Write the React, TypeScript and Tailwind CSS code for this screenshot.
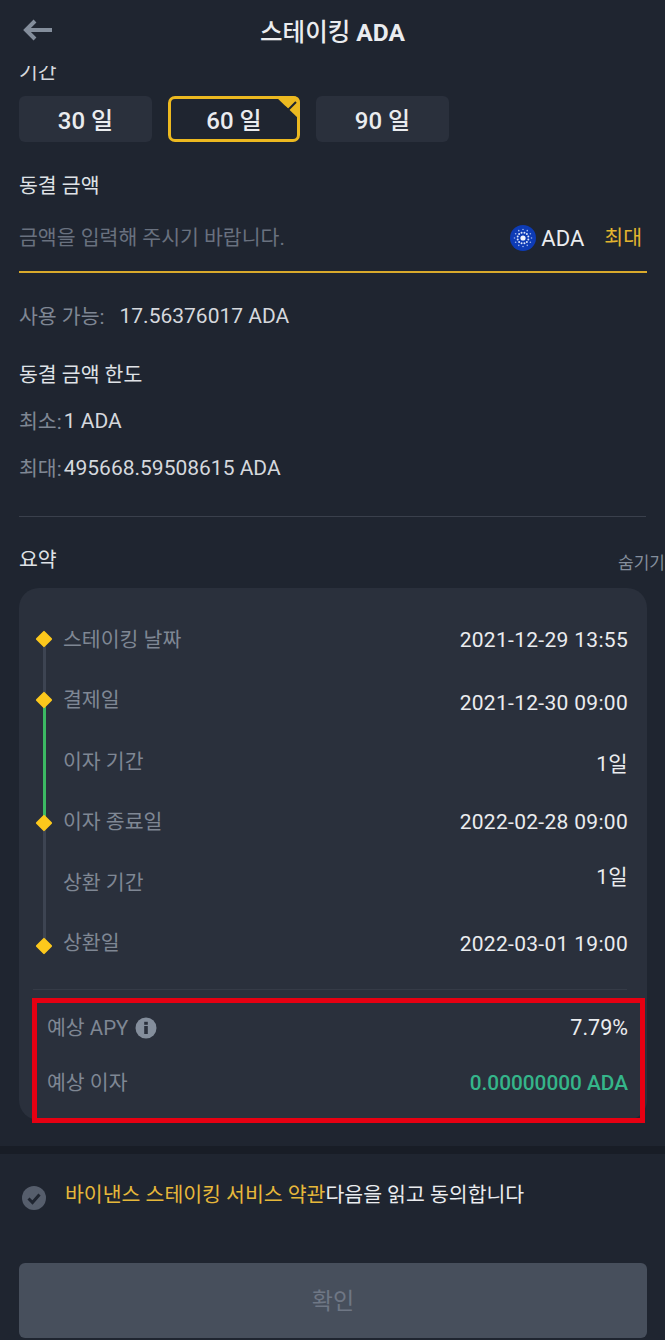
import React from "react";

const fontStack = "font-['Roboto','Noto_Sans_CJK_KR',sans-serif]";

type TRow = {
  label: string;
  value: string;
  labelClass: string;
  valueClass: string;
  top: string;
  bottom: string;
  diamond: boolean;
};

const rows: TRow[] = [
  { label: "스테이킹 날짜", value: "2021-12-29 13:55", labelClass: "translate-y-[2px]", valueClass: "translate-y-[2px]", top: "bg-transparent", bottom: "bg-[#3d4452]", diamond: true },
  { label: "결제일", value: "2021-12-30 09:00", labelClass: "", valueClass: "translate-y-[4px]", top: "bg-[#3d4452]", bottom: "bg-[#3cb963]", diamond: true },
  { label: "이자 기간", value: "1일", labelClass: "translate-y-[1px]", valueClass: "translate-y-[3px]", top: "bg-[#3cb963]", bottom: "bg-[#3cb963]", diamond: false },
  { label: "이자 종료일", value: "2022-02-28 09:00", labelClass: "", valueClass: "", top: "bg-[#3cb963]", bottom: "bg-[#3d4452]", diamond: true },
  { label: "상환 기간", value: "1일", labelClass: "-translate-y-[1px]", valueClass: "-translate-y-[7px]", top: "bg-[#3d4452]", bottom: "bg-[#3d4452]", diamond: false },
  { label: "상환일", value: "2022-03-01 19:00", labelClass: "-translate-y-[2px]", valueClass: "-translate-y-[1px]", top: "bg-[#3d4452]", bottom: "bg-transparent", diamond: true },
];

const dots = Array.from({ length: 12 }, (_, i) => (i * Math.PI) / 6);

const AdaIcon = () => (
  <svg width="26" height="26" viewBox="0 0 26 26">
    <circle cx="13" cy="13" r="13" fill="#0d3bb5" />
    {dots.map((a) => (
      <circle key={a} cx={13 + Math.cos(a) * 8.5} cy={13 + Math.sin(a) * 8.5} r="0.8" fill="#9fb6f0" />
    ))}
    {dots.map((a) => (
      <circle key={a} cx={13 + Math.cos(a + 0.26) * 5.5} cy={13 + Math.sin(a + 0.26) * 5.5} r="1" fill="#dfe7fb" />
    ))}
    <circle cx="13" cy="13" r="2.6" fill="#f2f5fd" />
  </svg>
);

const App = () => {
  return (
    <div className={`w-[665px] h-[1340px] overflow-hidden flex flex-col bg-[#1f2530] ${fontStack}`}>
      <div className="relative h-[66px] shrink-0 flex items-center justify-center">
        <svg className="absolute left-[23px] top-[18px]" width="30" height="24" viewBox="0 0 30 24" fill="none">
          <path d="M12 3 3 12l9 9M4 12h25" stroke="#848e9c" strokeWidth="4" />
        </svg>
        <span className="text-[24.5px] font-medium text-[#eaecef]">스테이킹 <b className="font-bold">ADA</b></span>
      </div>

      <div className="h-[16px] shrink-0 overflow-hidden flex items-end px-[19px]">
        <span className="text-[20.5px] leading-[28px] -mb-[4px] text-[#d5d8dd]">기간</span>
      </div>

      <div className="mt-[14px] flex gap-[16px] px-[19px]">
        <div className="w-[133px] h-[46px] pt-[3px] rounded-[6px] bg-[#2a303c] flex items-center justify-center text-[24px] font-medium text-[#eaecef]">30 일</div>
        <div className="relative w-[132px] h-[46px] pt-[3px] rounded-[7px] border-[3px] border-[#ecb920] flex items-center justify-center text-[24px] font-medium text-[#eaecef]">
          60 일
          <svg className="absolute -top-[3px] -right-[3px]" width="25" height="24" viewBox="0 0 25 24">
            <path d="M0 0H18Q25 0 25 7V24Z" fill="#ecb920" />
            <path d="M10 11l3 3 8-8" fill="none" stroke="#1f2530" strokeWidth="2" />
          </svg>
        </div>
        <div className="w-[133px] h-[46px] pt-[3px] rounded-[6px] bg-[#2a303c] flex items-center justify-center text-[24px] font-medium text-[#eaecef]">90 일</div>
      </div>

      <div className="mt-[29px] px-[19px] h-[30px] flex items-center text-[20.5px] text-[#dfe2e6]">동결 금액</div>

      <div className="mt-[23px] ml-[19px] mr-[18px] pb-[19px] h-[49px] border-b-2 border-[#d9aa2c] flex items-center">
        <span className="text-[20.5px] text-[#69717f] flex-1">금액을 입력해 주시기 바랍니다.</span>
        <AdaIcon />
        <span className="ml-[5px] text-[22px] text-[#eaecef]">ADA</span>
        <span className="ml-[20px] mr-[5px] text-[20.5px] text-[#e3b52f]">최대</span>
      </div>

      <div className="mt-[29px] px-[19px] h-[30px] flex items-center text-[20.5px]">
        <span className="text-[#7f8794]">사용 가능:</span>
        <span className="ml-[15px] text-[21px] text-[#d5d8dd]">17.56376017 ADA</span>
      </div>
      <div className="mt-[28px] px-[19px] h-[30px] flex items-center text-[20.5px] text-[#dfe2e6]">동결 금액 한도</div>
      <div className="mt-[17px] px-[19px] h-[30px] flex items-center text-[20.5px]">
        <span className="text-[#7f8794]">최소:</span>
        <span className="ml-[2px] text-[21px] text-[#d5d8dd]">1 ADA</span>
      </div>
      <div className="mt-[17px] px-[19px] h-[30px] flex items-center text-[20.5px]">
        <span className="text-[#7f8794]">최대:</span>
        <span className="ml-[2px] text-[21px] text-[#d5d8dd]">495668.59508615 ADA</span>
      </div>

      <div className="mt-[32px] mx-[19px] h-[1px] bg-[#3a404c] shrink-0" />

      <div className="mt-[28px] pl-[19px] h-[30px] flex justify-between text-[#dfe2e6] text-[20.5px]">
        <span>요약</span>
        <span className="mt-[6px] text-[17px] text-[#848e9c]">숨기기</span>
      </div>

      <div className="mt-[13px] ml-[19px] mr-[18px] rounded-[20px] bg-[#2a303c] pt-[20px] h-[532px] shrink-0">
        {rows.map((row) => (
          <div key={row.label} className="h-[61.4px] flex pl-[15px] pr-[19px]">
            <div className="w-[20px] flex flex-col items-center">
              <div className={`w-[3px] flex-1 ${row.top}`} />
              {row.diamond && <div className="w-[12px] h-[12px] rotate-45 rounded-[1px] bg-[#fcc81c] shrink-0" />}
              <div className={`w-[3px] flex-1 ${row.bottom}`} />
            </div>
            <div className="ml-[9px] flex-1 flex items-center justify-between text-[20.5px]">
              <span className={`text-[#7f8794] ${row.labelClass}`}>{row.label}</span>
              <span className={`text-[21px] tracking-[0.3px] text-[#eaecef] ${row.valueClass}`}>{row.value}</span>
            </div>
          </div>
        ))}
        <div className="mt-[13px] ml-[14px] mr-[20px] h-[1px] bg-[#353b47]" />
        <div className="mt-[8px] ml-[13px] mr-[2px] h-[125px] border-[5px] border-[#e60012] pt-[1px] pl-[10px] pr-[12px]">
          <div className="flex items-center justify-between h-[48px] text-[20.5px]">
            <span className="flex items-center text-[#7f8794]">
              예상 APY
              <svg className="ml-[7px]" width="22" height="22" viewBox="0 0 22 22">
                <circle cx="11" cy="11" r="10.5" fill="#848e9c" />
                <rect x="9.2" y="9" width="3.6" height="8" fill="#2a303c" />
                <rect x="9.2" y="4.8" width="3.6" height="3" fill="#2a303c" />
              </svg>
            </span>
            <span className="text-[21.5px] text-[#eaecef]">7.79%</span>
          </div>
          <div className="mt-[7px] flex items-center justify-between h-[48px] text-[20.5px]">
            <span className="text-[#7f8794]">예상 이자</span>
            <span className="text-[20.8px] font-medium text-[#35b58a]">0.00000000 ADA</span>
          </div>
        </div>
      </div>

      <div className="mt-[26px] h-[8px] shrink-0 bg-[#181d26]" />

      <div className="mt-[26px] pl-[22px] flex items-center text-[20.5px] h-[30px]">
        <svg className="shrink-0 mt-[6px]" width="24" height="24" viewBox="0 0 24 24">
          <circle cx="12" cy="12" r="12" fill="#565e6c" />
          <path d="M6.5 12.5l4 4 7-8" fill="none" stroke="#1f2530" strokeWidth="3" />
        </svg>
        <span className="ml-[19px] text-[#e6b83a]">바이낸스 스테이킹 서비스 약관</span>
        <span className="text-[#eaecef]">다음을 읽고 동의합니다</span>
      </div>

      <div className="mt-[53px] ml-[19px] mr-[18px] h-[75px] pt-[3px] shrink-0 rounded-[6px] bg-[#474f5c] flex items-center justify-center text-[23px] text-[#6f7785]">확인</div>
    </div>
  );
};

export default App;
